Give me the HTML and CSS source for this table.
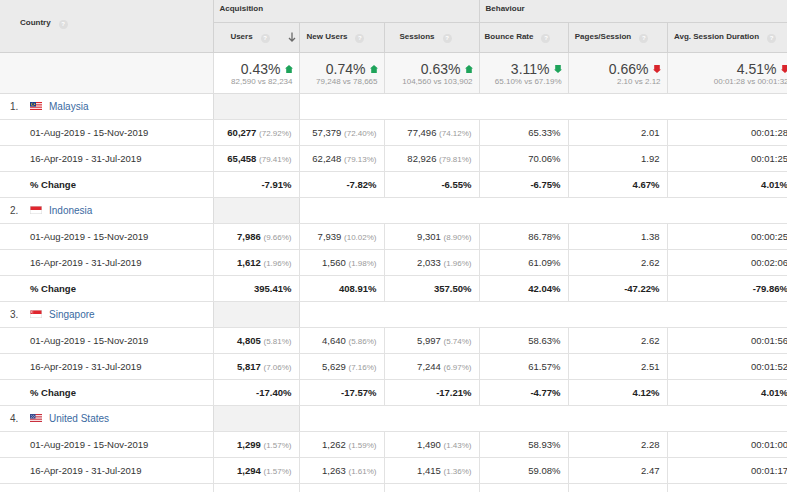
FILE: index.html
```html
<!DOCTYPE html>
<html>
<head>
<meta charset="utf-8">
<link rel="stylesheet" href="styles.css">
</head>
<body>
<table class="report">
  <colgroup>
    <col class="c-country"><col class="c-users"><col class="c-new"><col class="c-sess"><col class="c-bounce"><col class="c-pages"><col class="c-dur">
  </colgroup>
  <thead>
    <tr class="h1">
      <th class="h-country" rowspan="2"><span class="hl">Country</span><span class="help">?</span></th>
      <th class="h-group" colspan="3">Acquisition</th>
      <th class="h-group" colspan="3">Behaviour</th>
    </tr>
    <tr class="h2">
      <th class="h-metric sorted">Users<span class="help">?</span>
        <svg class="sort" width="8" height="10" viewBox="0 0 8 10"><path d="M4 0.5V9M1 6l3 3 3-3" fill="none" stroke="#6b6b6b" stroke-width="1.3"/></svg>
      </th>
      <th class="h-metric">New Users<span class="help">?</span></th>
      <th class="h-metric">Sessions<span class="help">?</span></th>
      <th class="h-metric">Bounce Rate<span class="help">?</span></th>
      <th class="h-metric">Pages/Session<span class="help">?</span></th>
      <th class="h-metric">Avg. Session Duration<span class="help">?</span></th>
    </tr>
  </thead>
  <tbody>
    <tr class="summary">
      <td class="s-empty"></td>
      <td class="s-val sorted"><div class="big">0.43%<svg class="arr" viewBox="0 0 8 8"><polygon class="up" points="4,0 8,3.6 6.8,3.6 6.8,8 1.2,8 1.2,3.6 0,3.6"/></svg></div><div class="sub">82,590 vs 82,234</div></td>
      <td class="s-val"><div class="big">0.74%<svg class="arr" viewBox="0 0 8 8"><polygon class="up" points="4,0 8,3.6 6.8,3.6 6.8,8 1.2,8 1.2,3.6 0,3.6"/></svg></div><div class="sub">79,248 vs 78,665</div></td>
      <td class="s-val"><div class="big">0.63%<svg class="arr" viewBox="0 0 8 8"><polygon class="up" points="4,0 8,3.6 6.8,3.6 6.8,8 1.2,8 1.2,3.6 0,3.6"/></svg></div><div class="sub">104,560 vs 103,902</div></td>
      <td class="s-val"><div class="big">3.11%<svg class="arr" viewBox="0 0 8 8"><polygon class="up" points="1.2,0 6.8,0 6.8,4.4 8,4.4 4,8 0,4.4 1.2,4.4"/></svg></div><div class="sub">65.10% vs 67.19%</div></td>
      <td class="s-val"><div class="big">0.66%<svg class="arr" viewBox="0 0 8 8"><polygon class="down" points="1.2,0 6.8,0 6.8,4.4 8,4.4 4,8 0,4.4 1.2,4.4"/></svg></div><div class="sub">2.10 vs 2.12</div></td>
      <td class="s-val"><div class="big">4.51%<svg class="arr" viewBox="0 0 8 8"><polygon class="down" points="1.2,0 6.8,0 6.8,4.4 8,4.4 4,8 0,4.4 1.2,4.4"/></svg></div><div class="sub">00:01:28 vs 00:01:32</div></td>
    </tr>

    <tr class="grp">
      <td class="g-name"><span class="idx">1.</span><svg class="flag" viewBox="0 0 12 8"><rect width="12" height="8" fill="#fff"/><rect y="0" width="12" height="1.15" fill="#d8262e"/><rect y="2.3" width="12" height="1.15" fill="#d8262e"/><rect y="4.6" width="12" height="1.15" fill="#d8262e"/><rect y="6.85" width="12" height="1.15" fill="#d8262e"/><rect width="6" height="4.6" fill="#1d3f8f"/><circle cx="2.6" cy="2.3" r="1.5" fill="#f5c518"/><circle cx="3.1" cy="2.3" r="1.2" fill="#1d3f8f"/><circle cx="4.5" cy="2.3" r="0.7" fill="#f5c518"/></svg><span class="cname">Malaysia</span></td>
      <td class="g-users"></td><td class="g-rest" colspan="5"></td>
    </tr>
    <tr class="row">
      <td class="lbl">01-Aug-2019 - 15-Nov-2019</td>
      <td class="num"><b>60,277</b> <span class="pct">(72.92%)</span></td>
      <td class="num">57,379 <span class="pct">(72.40%)</span></td>
      <td class="num">77,496 <span class="pct">(74.12%)</span></td>
      <td class="num">65.33%</td><td class="num">2.01</td><td class="num">00:01:28</td>
    </tr>
    <tr class="row">
      <td class="lbl">16-Apr-2019 - 31-Jul-2019</td>
      <td class="num"><b>65,458</b> <span class="pct">(79.41%)</span></td>
      <td class="num">62,248 <span class="pct">(79.13%)</span></td>
      <td class="num">82,926 <span class="pct">(79.81%)</span></td>
      <td class="num">70.06%</td><td class="num">1.92</td><td class="num">00:01:25</td>
    </tr>
    <tr class="row chg">
      <td class="lbl">% Change</td>
      <td class="num">-7.91%</td><td class="num">-7.82%</td><td class="num">-6.55%</td><td class="num">-6.75%</td><td class="num">4.67%</td><td class="num">4.01%</td>
    </tr>

    <tr class="grp">
      <td class="g-name"><span class="idx">2.</span><svg class="flag" viewBox="0 0 12 8"><rect width="12" height="8" fill="#fff"/><rect width="12" height="4" fill="#e0262f"/><rect x="0.25" y="0.25" width="11.5" height="7.5" fill="none" stroke="#d9d9d9" stroke-width="0.5"/></svg><span class="cname">Indonesia</span></td>
      <td class="g-users"></td><td class="g-rest" colspan="5"></td>
    </tr>
    <tr class="row">
      <td class="lbl">01-Aug-2019 - 15-Nov-2019</td>
      <td class="num"><b>7,986</b> <span class="pct">(9.66%)</span></td>
      <td class="num">7,939 <span class="pct">(10.02%)</span></td>
      <td class="num">9,301 <span class="pct">(8.90%)</span></td>
      <td class="num">86.78%</td><td class="num">1.38</td><td class="num">00:00:25</td>
    </tr>
    <tr class="row">
      <td class="lbl">16-Apr-2019 - 31-Jul-2019</td>
      <td class="num"><b>1,612</b> <span class="pct">(1.96%)</span></td>
      <td class="num">1,560 <span class="pct">(1.98%)</span></td>
      <td class="num">2,033 <span class="pct">(1.96%)</span></td>
      <td class="num">61.09%</td><td class="num">2.62</td><td class="num">00:02:06</td>
    </tr>
    <tr class="row chg">
      <td class="lbl">% Change</td>
      <td class="num">395.41%</td><td class="num">408.91%</td><td class="num">357.50%</td><td class="num">42.04%</td><td class="num">-47.22%</td><td class="num">-79.86%</td>
    </tr>

    <tr class="grp">
      <td class="g-name"><span class="idx">3.</span><svg class="flag" viewBox="0 0 12 8"><rect width="12" height="8" fill="#fff"/><rect width="12" height="4" fill="#e0262f"/><circle cx="2.6" cy="2" r="1.3" fill="#fff"/><circle cx="3.1" cy="2" r="1.1" fill="#e0262f"/><rect x="0.25" y="0.25" width="11.5" height="7.5" fill="none" stroke="#d9d9d9" stroke-width="0.5"/></svg><span class="cname">Singapore</span></td>
      <td class="g-users"></td><td class="g-rest" colspan="5"></td>
    </tr>
    <tr class="row">
      <td class="lbl">01-Aug-2019 - 15-Nov-2019</td>
      <td class="num"><b>4,805</b> <span class="pct">(5.81%)</span></td>
      <td class="num">4,640 <span class="pct">(5.86%)</span></td>
      <td class="num">5,997 <span class="pct">(5.74%)</span></td>
      <td class="num">58.63%</td><td class="num">2.62</td><td class="num">00:01:56</td>
    </tr>
    <tr class="row">
      <td class="lbl">16-Apr-2019 - 31-Jul-2019</td>
      <td class="num"><b>5,817</b> <span class="pct">(7.06%)</span></td>
      <td class="num">5,629 <span class="pct">(7.16%)</span></td>
      <td class="num">7,244 <span class="pct">(6.97%)</span></td>
      <td class="num">61.57%</td><td class="num">2.51</td><td class="num">00:01:52</td>
    </tr>
    <tr class="row chg">
      <td class="lbl">% Change</td>
      <td class="num">-17.40%</td><td class="num">-17.57%</td><td class="num">-17.21%</td><td class="num">-4.77%</td><td class="num">4.12%</td><td class="num">4.01%</td>
    </tr>

    <tr class="grp">
      <td class="g-name"><span class="idx">4.</span><svg class="flag" viewBox="0 0 12 8"><rect width="12" height="8" fill="#fff"/><rect y="0" width="12" height="1.15" fill="#c9303e"/><rect y="2.3" width="12" height="1.15" fill="#c9303e"/><rect y="4.6" width="12" height="1.15" fill="#c9303e"/><rect y="6.85" width="12" height="1.15" fill="#c9303e"/><rect width="5.5" height="4.6" fill="#3b4b8f"/><circle cx="1.5" cy="1.3" r="0.4" fill="#fff"/><circle cx="3.5" cy="1.3" r="0.4" fill="#fff"/><circle cx="2.5" cy="2.6" r="0.4" fill="#fff"/><circle cx="4.3" cy="2.6" r="0.4" fill="#fff"/><circle cx="1.5" cy="3.7" r="0.4" fill="#fff"/><circle cx="3.5" cy="3.7" r="0.4" fill="#fff"/></svg><span class="cname">United States</span></td>
      <td class="g-users"></td><td class="g-rest" colspan="5"></td>
    </tr>
    <tr class="row">
      <td class="lbl">01-Aug-2019 - 15-Nov-2019</td>
      <td class="num"><b>1,299</b> <span class="pct">(1.57%)</span></td>
      <td class="num">1,262 <span class="pct">(1.59%)</span></td>
      <td class="num">1,490 <span class="pct">(1.43%)</span></td>
      <td class="num">58.93%</td><td class="num">2.28</td><td class="num">00:01:00</td>
    </tr>
    <tr class="row">
      <td class="lbl">16-Apr-2019 - 31-Jul-2019</td>
      <td class="num"><b>1,294</b> <span class="pct">(1.57%)</span></td>
      <td class="num">1,263 <span class="pct">(1.61%)</span></td>
      <td class="num">1,415 <span class="pct">(1.36%)</span></td>
      <td class="num">59.08%</td><td class="num">2.47</td><td class="num">00:01:17</td>
    </tr>
    <tr class="row chg">
      <td class="lbl">% Change</td>
      <td class="num">0.39%</td><td class="num">-0.08%</td><td class="num">5.30%</td><td class="num">-0.25%</td><td class="num">-7.69%</td><td class="num">-21.52%</td>
    </tr>
  </tbody>
</table>
</body>
</html>
```

FILE: styles.css
```css
html, body {
  margin: 0;
  padding: 0;
  background: #ffffff;
  overflow: hidden;
}
body {
  font-family: "Liberation Sans", Arial, sans-serif;
  color: #333333;
  width: 787px;
  height: 492px;
}
.report {
  border-collapse: collapse;
  table-layout: fixed;
  width: 795px;
}
.c-country { width: 213px; }
.c-users { width: 86px; }
.c-new { width: 85px; }
.c-sess { width: 95px; }
.c-bounce { width: 89px; }
.c-pages { width: 99px; }
.c-dur { width: 128px; }

th, td {
  padding: 0;
  box-sizing: border-box;
  white-space: nowrap;
  overflow: hidden;
}

/* header */
th {
  background: #ebebeb;
  font-size: 8px;
  font-weight: bold;
  color: #333333;
  border: 1px solid #d2d2d2;
  border-top: none;
}
.h-country {
  border-left: none;
  text-align: left;
  padding: 0 0 4px 20px;
  vertical-align: middle;
}
.h1 { height: 22px; }
.h-group {
  text-align: left;
  padding: 0 0 4px 6px;
  vertical-align: middle;
}
.h2 { height: 30px; }
.h-metric {
  text-align: center;
  padding: 0 12px 0 0;
  position: relative;
}
.help {
  display: inline-block;
  width: 9px;
  height: 9px;
  border-radius: 50%;
  background: #dedede;
  color: #ffffff;
  font-size: 6px;
  line-height: 9px;
  text-align: center;
  font-weight: bold;
  margin-left: 8px;
  vertical-align: -1px;
}
.sort {
  position: absolute;
  right: 3px;
  top: 9px;
}

/* summary */
.summary { height: 41px; }
.summary td {
  background: #f7f7f7;
  border: 1px solid #dedede;
  border-top: none;
}
.summary td.s-empty { border-left: none; }
.summary td.sorted { background: #ffffff; }
.s-val {
  text-align: right;
  padding: 2px 6px 0 0;
  vertical-align: middle;
}
.big {
  font-size: 14px;
  color: #444444;
  line-height: 16px;
}
.sub {
  font-size: 8px;
  color: #9a9a9a;
  line-height: 10px;
}
.arr {
  width: 8px;
  height: 8px;
  margin-left: 4px;
  vertical-align: 1px;
}
.up { fill: #1ea35a; }
.down { fill: #d9252c; }

/* group rows */
.grp { height: 26px; }
.grp td {
  border-bottom: 1px solid #e2e2e2;
}
.g-name {
  font-size: 10px;
  padding-left: 10px;
  vertical-align: middle;
}
.idx {
  display: inline-block;
  width: 20px;
  color: #444444;
}
.flag {
  width: 12px;
  height: 8px;
  vertical-align: 0;
  margin-right: 7px;
}
.cname { color: #3a6aa1; }
.g-users {
  background: #f2f2f2;
  border-left: 1px solid #dcdcdc;
  border-right: 1px solid #dcdcdc;
}

/* data rows */
.row { height: 26px; }
.row td {
  border-bottom: 1px solid #e2e2e2;
  font-size: 9.5px;
  vertical-align: middle;
}
.row td + td { border-left: 1px solid #e2e2e2; }
.lbl { padding-left: 30px; color: #333333; }
.num {
  text-align: right;
  padding-right: 7px;
  color: #333333;
}
.num b { color: #222222; }
.pct {
  font-size: 8px;
  color: #9a9a9a;
}
.chg td { font-weight: bold; color: #222222; }
```
